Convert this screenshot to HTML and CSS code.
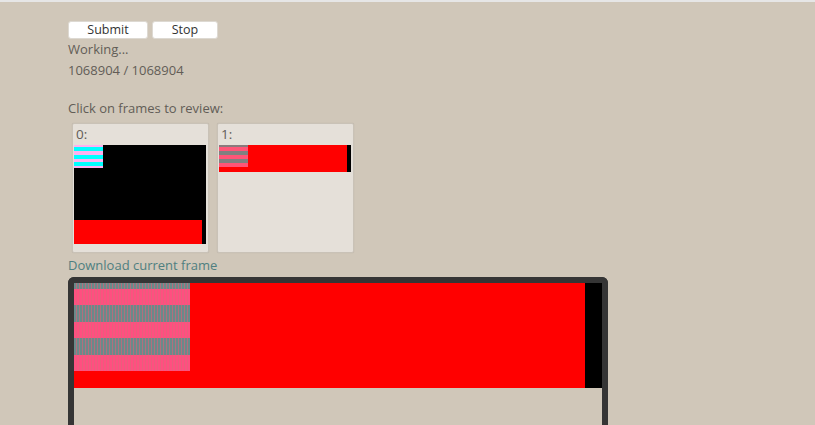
FILE: index.html
```html
<!DOCTYPE html>
<html>
<head>
<meta charset="utf-8">
<link rel="stylesheet" href="styles.css">
</head>
<body>
<div class="page">
  <div class="controls">
    <button class="btn btn-submit">Submit</button>
    <button class="btn btn-stop">Stop</button>
  </div>
  <div class="status">Working...</div>
  <div class="status">1068904 / 1068904</div>
  <div class="review-label">Click on frames to review:</div>
  <div class="frames">
    <div class="card">
      <div class="card-label">0:</div>
      <div class="thumb thumb0">
        <div class="t0-pattern"></div>
        <div class="t0-red"></div>
      </div>
    </div>
    <div class="card">
      <div class="card-label">1:</div>
      <div class="thumb thumb1">
        <div class="t1-pattern"></div>
      </div>
    </div>
  </div>
  <a class="download" href="#">Download current frame</a>
  <div class="viewer">
    <div class="frame">
      <div class="pattern">
        <div class="band band-g b6"></div>
        <div class="band band-p b16"></div>
        <div class="band band-g b17"></div>
        <div class="band band-p b16"></div>
        <div class="band band-g b17"></div>
        <div class="band band-p b16"></div>
      </div>
    </div>
  </div>
</div>
</body>
</html>
```

FILE: styles.css
```css
html, body {
  margin: 0;
  padding: 0;
  background: #d0c7b9;
  overflow: hidden;
}
body {
  border-top: 2px solid #e6e6e6;
  font-family: "Open Sans", "Noto Sans", sans-serif;
  font-size: 13px;
  color: #625d57;
  height: 423px;
}
.page {
  padding: 19px 0 0 68px;
}
.controls {
  display: flex;
  gap: 4px;
  height: 18px;
}
.btn {
  height: 18px;
  padding: 0;
  margin: 0;
  background: #ffffff;
  border: 1px solid #ddd9d2;
  border-radius: 3px;
  font-family: "Open Sans", "Noto Sans", sans-serif;
  font-size: 12.5px;
  color: #333;
  line-height: 16px;
}
.btn-submit { width: 80px; }
.btn-stop { width: 66px; }
.status {
  line-height: 21px;
}
.review-label {
  margin-top: 17px;
  line-height: 21px;
}
.frames {
  display: flex;
  gap: 8px;
  margin: 4px 0 0 4px;
}
.card {
  box-sizing: border-box;
  width: 137px;
  height: 130px;
  background: #e5e0d9;
  border: 1px solid #c9c2b7;
  border-radius: 2px;
  box-shadow: 0 0 1px rgba(0,0,0,0.15);
  padding: 0 0 0 1px;
}
.card-label {
  height: 21px;
  line-height: 21px;
  padding-left: 2px;
  font-size: 13.5px;
}
.thumb {
  width: 132px;
  background: #000;
}
.thumb0 {
  height: 99px;
  display: flex;
  flex-direction: column;
  justify-content: space-between;
}
.t0-pattern {
  width: 29px;
  height: 23px;
  background: linear-gradient(to bottom,
    #ffb0f0 0 2px, #00ffff 2px 6px, #ffb0f0 6px 10px, #00ffff 10px 14px,
    #ffb0f0 14px 17px, #00ffff 17px 21px, #ffb0f0 21px 23px);
}
.t0-red {
  width: 128px;
  height: 24px;
  background: #ff0000;
}
.thumb1 {
  height: 27px;
  background: linear-gradient(to right, #ff0000 0 128px, #000 128px);
}
.t1-pattern {
  width: 29px;
  height: 23px;
  background: linear-gradient(to bottom,
    #8a7a7c 0 1.5px, #ff5577 1.5px 5.5px, #808080 5.5px 9.75px, #ff5577 9.75px 13.75px,
    #808080 13.75px 18px, #ff5577 18px 22px, #ff0000 22px);
}
.download {
  display: block;
  margin-top: 2px;
  line-height: 21px;
  color: #4f7f80;
  text-decoration: none;
  font-size: 13px;
}
.viewer {
  width: 528px;
  height: 400px;
  border: 6px solid #353535;
  border-bottom: none;
  border-radius: 6px 6px 0 0;
  margin-top: 1px;
}
.frame {
  height: 105px;
  background: linear-gradient(to right, #ff0000 0 511px, #000 511px);
}
.pattern {
  width: 116px;
  display: flex;
  flex-direction: column;
}
.band { width: 100%; }
.b6 { height: 6px; }
.b16 { height: 16px; }
.b17 { height: 17px; }
.band-p {
  background: repeating-linear-gradient(to right, #ff4f80 0 2px, #e8607c 2px 3px);
}
.band-g {
  background: repeating-linear-gradient(to right, #6a8a8a 0 2px, #b0707e 2px 3px);
}
```
